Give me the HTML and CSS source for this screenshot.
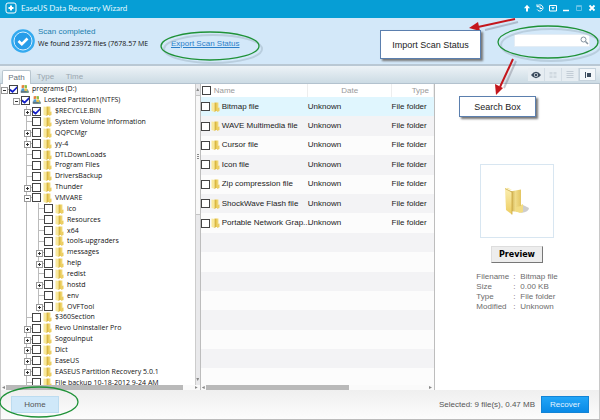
FILE: index.html
```html
<!DOCTYPE html>
<html lang="en">
<head>
<meta charset="utf-8">
<title>EaseUS Data Recovery Wizard</title>
<link rel="stylesheet" href="styles.css">
</head>
<body>
<svg class="defs" aria-hidden="true">
  <defs>
    <linearGradient id="gold" x1="0" x2="1" y1="0" y2="0"><stop offset="0" stop-color="#d9b53c"/><stop offset="0.4" stop-color="#e6c650"/><stop offset="1" stop-color="#f5e08a"/></linearGradient>
    <linearGradient id="cover" x1="0" x2="0" y1="0" y2="1"><stop offset="0" stop-color="#fbeeb0"/><stop offset="1" stop-color="#edcd60"/></linearGradient>
    <linearGradient id="sheet" x1="0" x2="1" y1="0" y2="0"><stop offset="0" stop-color="#c7a440"/><stop offset="0.5" stop-color="#f0dc8a"/><stop offset="1" stop-color="#e3c561"/></linearGradient>
  </defs>
  <symbol id="folder" viewBox="0 0 9 10"><path d="M3.500 .5H7.500V9H3.500z" fill="url(#gold)"/><path d="M.5 .5L4 1v9L.5 9z" fill="#f9e99c"/><path d="M4 1v9" stroke="#c9a637" stroke-width=".6"/><path d="M6.500 6L8.500 5.500V9L6 10z" fill="#ecce62"/></symbol>
  <symbol id="drive" viewBox="0 0 11 11"><path d="M1 6.500L9 5.500l2 3V10H1z" fill="#8d9ba3"/><path d="M1 8h9v2H1z" fill="#5c7680"/><path d="M2 1l3-.5v3.500L2 4.500z" fill="#e8803c"/><path d="M5.500 .5l3 .5v3.500l-3-.5z" fill="#8dbb45"/><path d="M2 5l3-.5v3L2 8z" fill="#4b9ed6"/><path d="M5.500 4.500l3 .5v3l-3-.5z" fill="#efc640"/><path d="M8 9h2" stroke="#77d16a"/></symbol>
</svg>

<div class="window">
  <header class="titlebar">
    <svg class="logo" viewBox="0 0 12 12"><rect x="1" y="1" width="10" height="10" rx="2" fill="none" stroke="#fff"/><path d="M6 3.500v5M3.500 6h5" stroke="#fff" stroke-width="2"/></svg>
    <h1>EaseUS Data Recovery Wizard</h1>
    <div class="winbuttons">
      <button aria-label="Upgrade"><svg viewBox="0 0 8 8"><path d="M4 3v4.500" stroke="#fff" stroke-width="2"/><path d="M1 4.200L4 .8l3 3.400z" fill="#fff"/></svg></button>
      <button aria-label="History"><svg viewBox="0 0 8 8"><path d="M1.500 2a3.100 3.100 0 1 1-.3 3.500M1 .3v2.400h2.500M4 2.500v2h2" fill="none" stroke="#fff"/></svg></button>
      <button aria-label="Menu"><svg viewBox="0 0 8 8"><path d="M.5 1.500h7v5.500h-7z" fill="none" stroke="#fff"/><path d="M2.200 3.200h3.600L4 5.400z" fill="#fff"/></svg></button>
      <button aria-label="Minimize"><svg viewBox="0 0 8 8"><path d="M1 6.500h6" stroke="#fff" stroke-width="1.500"/></svg></button>
      <button aria-label="Maximize"><svg viewBox="0 0 8 8"><path d="M1.500 1.500h5v5h-5zM1 2.500h6" fill="none" stroke="#62c0e6"/></svg></button>
      <button aria-label="Close"><svg viewBox="0 0 8 8"><path d="M1.500 1.500l5 5M6.500 1.500l-5 5" stroke="#fff" stroke-width="1.800"/></svg></button>
    </div>
  </header>

  <section class="status">
    <svg class="badge" viewBox="0 0 24 24"><circle cx="12" cy="12" r="11.800" fill="#33aaf0"/><circle cx="12" cy="12" r="9" fill="#279de9" stroke="#d6efff" stroke-width="1"/><path d="M7.500 12l3.300 3.200 5.700-5.700" fill="none" stroke="#fff" stroke-width="2.600"/></svg>
    <div class="message">
      <p class="done">Scan completed</p>
      <p class="found">We found 23972 files (7678.57 ME</p>
    </div>
    <div class="export">
      <a href="#export">Export Scan Status</a>
      <svg class="ring" viewBox="0 0 106 34"><ellipse class="shade" cx="53" cy="18" rx="49" ry="14"/><ellipse cx="50" cy="15" rx="49" ry="14"/></svg>
    </div>
    <div class="search">
      <input type="search" aria-label="Search">
      <svg class="glass" viewBox="0 0 9 9"><circle cx="3.500" cy="3.500" r="2.500" fill="none" stroke="#8593a0"/><path d="M5.500 5.500L8 8" stroke="#8593a0" stroke-width="1.500"/></svg>
      <svg class="ring" viewBox="0 0 106 38"><ellipse class="shade" cx="54" cy="20" rx="50" ry="16"/><ellipse cx="51" cy="17" rx="50" ry="16"/></svg>
    </div>
  </section>

  <nav class="tabs">
    <button class="tab active">Path</button>
    <button class="tab">Type</button>
    <button class="tab">Time</button>
    <div class="views">
      <button aria-label="Preview"><svg viewBox="0 0 10 8"><path d="M0 4Q5-2.500 10 4 5 10.500 0 4z" fill="#3a4b5d"/><circle cx="5" cy="4" r="2.100" fill="#dfe6ec"/><circle cx="5" cy="4" r="1.300" fill="#3a4b5d"/></svg></button>
      <button aria-label="Grid"><svg viewBox="0 0 10 8"><path d="M1.500 1h3v2.500h-3zM5.500 1h3v2.500h-3zM1.500 4.500h3V7h-3zM5.500 4.500h3V7h-3z" fill="#d0d9e0"/></svg></button>
      <button aria-label="List"><svg viewBox="0 0 10 8"><path d="M1.500 .5h7M1.500 2.500h7M1.500 4.500h7M1.500 6.500h7" stroke="#c3cdd6"/></svg></button>
      <button class="on" aria-label="Details"><svg viewBox="0 0 10 8"><path d="M2.500 1v6" stroke="#3a4b5d"/><path d="M4 2h4v4H4z" fill="#3a4b5d"/></svg></button>
    </div>
  </nav>

  <main class="panes">
    <section class="tree">
      <div class="treeview">
        <ul>
          <li class="l0"><i class="minus"></i><label><input type="checkbox" checked><svg><use href="#drive"/></svg>programs (D:)</label></li>
          <li class="l1"><i class="minus"></i><label><input type="checkbox" checked><svg><use href="#drive"/></svg>Losted Partition1(NTFS)</label></li>
          <li class="l2"><i class="plus"></i><label><input type="checkbox" checked><svg><use href="#folder"/></svg>$RECYCLE.BIN</label></li>
          <li class="l2"><i></i><label><input type="checkbox"><svg><use href="#folder"/></svg>System Volume Information</label></li>
          <li class="l2"><i class="plus"></i><label><input type="checkbox"><svg><use href="#folder"/></svg>QQPCMgr</label></li>
          <li class="l2"><i class="plus"></i><label><input type="checkbox"><svg><use href="#folder"/></svg>yy-4</label></li>
          <li class="l2"><i></i><label><input type="checkbox"><svg><use href="#folder"/></svg>DTLDownLoads</label></li>
          <li class="l2"><i></i><label><input type="checkbox"><svg><use href="#folder"/></svg>Program Files</label></li>
          <li class="l2"><i></i><label><input type="checkbox"><svg><use href="#folder"/></svg>DriversBackup</label></li>
          <li class="l2"><i class="plus"></i><label><input type="checkbox"><svg><use href="#folder"/></svg>Thunder</label></li>
          <li class="l2"><i class="minus"></i><label><input type="checkbox"><svg><use href="#folder"/></svg>VMVARE</label></li>
          <li class="l3"><i></i><label><input type="checkbox"><svg><use href="#folder"/></svg>ico</label></li>
          <li class="l3"><i></i><label><input type="checkbox"><svg><use href="#folder"/></svg>Resources</label></li>
          <li class="l3"><i></i><label><input type="checkbox"><svg><use href="#folder"/></svg>x64</label></li>
          <li class="l3"><i></i><label><input type="checkbox"><svg><use href="#folder"/></svg>tools-upgraders</label></li>
          <li class="l3"><i class="plus"></i><label><input type="checkbox"><svg><use href="#folder"/></svg>messages</label></li>
          <li class="l3"><i class="plus"></i><label><input type="checkbox"><svg><use href="#folder"/></svg>help</label></li>
          <li class="l3"><i></i><label><input type="checkbox"><svg><use href="#folder"/></svg>redist</label></li>
          <li class="l3"><i class="plus"></i><label><input type="checkbox"><svg><use href="#folder"/></svg>hostd</label></li>
          <li class="l3"><i></i><label><input type="checkbox"><svg><use href="#folder"/></svg>env</label></li>
          <li class="l3"><i class="plus"></i><label><input type="checkbox"><svg><use href="#folder"/></svg>OVFTool</label></li>
          <li class="l2"><i></i><label><input type="checkbox"><svg><use href="#folder"/></svg>$360Section</label></li>
          <li class="l2"><i class="plus"></i><label><input type="checkbox"><svg><use href="#folder"/></svg>Revo Uninstaller Pro</label></li>
          <li class="l2"><i class="plus"></i><label><input type="checkbox"><svg><use href="#folder"/></svg>SogouInput</label></li>
          <li class="l2"><i class="plus"></i><label><input type="checkbox"><svg><use href="#folder"/></svg>Dict</label></li>
          <li class="l2"><i class="plus"></i><label><input type="checkbox"><svg><use href="#folder"/></svg>EaseUS</label></li>
          <li class="l2"><i class="plus"></i><label><input type="checkbox"><svg><use href="#folder"/></svg>EASEUS Partition Recovery 5.0.1</label></li>
          <li class="l2"><i></i><label><input type="checkbox"><svg><use href="#folder"/></svg>File backup 10-18-2012 9-24 AM</label></li>
        </ul>
        <div class="vbar"><b class="up"></b><span></span><b class="down"></b></div>
      </div>
      <div class="hbar"><b class="left"></b><span></span><b class="right"></b></div>
    </section>

    <section class="files">
      <div class="sheet">
        <table>
          <colgroup><col class="cname"><col class="cdate"><col class="ctype"></colgroup>
          <thead><tr><th><label><input type="checkbox">Name</label></th><th class="date">Date</th><th class="type">Type</th></tr></thead>
          <tbody>
            <tr class="selected"><td><label><input type="checkbox"><svg><use href="#folder"/></svg>Bitmap file</label></td><td>Unknown</td><td>File folder</td></tr>
            <tr><td><label><input type="checkbox"><svg><use href="#folder"/></svg>WAVE Multimedia file</label></td><td>Unknown</td><td>File folder</td></tr>
            <tr><td><label><input type="checkbox"><svg><use href="#folder"/></svg>Cursor file</label></td><td>Unknown</td><td>File folder</td></tr>
            <tr><td><label><input type="checkbox"><svg><use href="#folder"/></svg>Icon file</label></td><td>Unknown</td><td>File folder</td></tr>
            <tr><td><label><input type="checkbox"><svg><use href="#folder"/></svg>Zip compression file</label></td><td>Unknown</td><td>File folder</td></tr>
            <tr><td><label><input type="checkbox"><svg><use href="#folder"/></svg>ShockWave Flash file</label></td><td>Unknown</td><td>File folder</td></tr>
            <tr><td><label><input type="checkbox"><svg><use href="#folder"/></svg>Portable Network Grap...</label></td><td>Unknown</td><td>File folder</td></tr>
            <tr><td colspan="3"></td></tr>
            <tr><td colspan="3"></td></tr>
            <tr><td colspan="3"></td></tr>
            <tr><td colspan="3"></td></tr>
            <tr><td colspan="3"></td></tr>
            <tr><td colspan="3"></td></tr>
            <tr><td colspan="3"></td></tr>
            <tr><td colspan="3"></td></tr>
          </tbody>
        </table>
      </div>
      <div class="hbar short"><b class="left"></b><span></span><b class="right"></b></div>
    </section>

    <aside class="preview">
      <div class="thumb">
        <svg viewBox="0 0 26 28"><path d="M17 26q8-1 8-5l-6-3z" fill="#cdcdcd"/><path d="M6 4.500L17 2.500V24l-3 1-8-1z" fill="url(#sheet)"/><path d="M1 1.500L8 5v22.500L2 23z" fill="url(#cover)"/><path d="M1 1.500L8 5v22.500" fill="none" stroke="#c8a43f" stroke-width=".8"/><path d="M1 1.500L4 .8l4 2.200" fill="#f9eba4"/><path d="M12 24.500V20l5-1v-1l2-1v8l-3 1z" fill="#f2dc83"/></svg>
      </div>
      <button class="previewbtn">Preview</button>
      <dl>
        <dt>Filename</dt><dd>Bitmap file</dd>
        <dt>Size</dt><dd>0.00 KB</dd>
        <dt>Type</dt><dd>File folder</dd>
        <dt>Modified</dt><dd>Unknown</dd>
      </dl>
    </aside>
  </main>

  <footer class="footer">
    <div class="homewrap">
      <button class="home">Home</button>
      <svg class="ring" viewBox="0 0 82 34"><ellipse cx="40" cy="16" rx="39" ry="15"/></svg>
    </div>
    <p>Selected: 9 file(s), 0.47 MB</p>
    <button class="recover">Recover</button>
  </footer>

  <div class="notes">
    <svg class="arrows" viewBox="0 0 140 80">
      <g class="arrowshade"><path d="M50 4L17 12M48 43L36 70"/></g>
      <g class="arrow"><path d="M47 1L10 9M45 41L32 69"/><path class="head" d="M1 10l9-6 2 9z"/><path class="head" d="M28 77l-1-11 8 4z"/></g>
    </svg>
    <p class="note import">Import Scan Status</p>
    <p class="note box">Search Box</p>
  </div>
</div>
</body>
</html>
```
FILE: styles.css
```css
* { box-sizing: border-box; }
body, h1, p, ul, dl, dd { margin: 0; padding: 0; }
html, body { height: 100%; }
body {
  font: 8px/10px "Liberation Sans", Arial, sans-serif;
  color: #333;
  background: #fff;
}
button {
  font: inherit;
  margin: 0;
  padding: 0;
  border: 0;
  background: none;
  color: inherit;
}
svg { display: block; flex: none; }
.defs { position: absolute; width: 0; height: 0; }

.window {
  position: relative;
  display: flex;
  flex-direction: column;
  height: 100vh;
  overflow: hidden;
  border-bottom: 1px solid #bbb;
}

/* Title bar */
.titlebar {
  flex: none;
  display: flex;
  align-items: center;
  height: 18px;
  padding: 0 4px 2px 5px;
  background: #069ed5;
  color: #e4f8ff;
}
.logo { width: 12px; height: 12px; margin-right: 4px; }
h1 { font: 8px/10px Lato, sans-serif; }
.winbuttons { display: flex; gap: 5px; margin-left: auto; }
.winbuttons svg { width: 8px; height: 8px; }

/* Scan status */
.status {
  flex: none;
  display: flex;
  align-items: flex-start;
  height: 48px;
  padding: 8px 10px 0 11px;
  background: #d3e8f9;
  border-bottom: 2px solid #b9c8d4;
}
.badge { width: 24px; height: 24px; margin-top: 3px; }
.message { width: 122px; margin-left: 3px; white-space: nowrap; }
.message p { line-height: 12px; }
.done { color: #1c7fae; }
.found { color: #111; font-family: "Open Sans", sans-serif; font-size: 7px; }
.export { position: relative; margin: 13px 0 0 11px; }
.export a { color: #2a7fc9; }
.ring { position: absolute; overflow: visible; pointer-events: none; }
.ring ellipse { fill: none; stroke: #1f9238; stroke-width: 1.3; }
.ring .shade { stroke: #a9bdcb; stroke-width: 2; opacity: 0.6; }
.export .ring { left: -11px; top: -8px; width: 106px; height: 34px; }
.search { position: relative; width: 76px; margin: 8px 0 0 auto; }
.search input {
  display: block;
  width: 100%;
  height: 13px;
  padding: 0 12px 0 3px;
  border: 1px solid #e4edf5;
  background: #fff;
  font: inherit;
}
.glass { position: absolute; right: 1px; top: 2px; width: 9px; height: 9px; }
.search .ring { right: -13px; top: -9px; width: 106px; height: 38px; }

/* Tabs */
.tabs {
  flex: none;
  display: flex;
  align-items: flex-end;
  height: 18px;
  padding: 0 4px 0 2px;
  background: linear-gradient(#edf3f7, #ccdbe4);
  border-bottom: 1px solid #b3c2ce;
}
.tab { width: 29px; height: 13px; color: #9ba7b0; }
.tab.active {
  height: 14px;
  margin-bottom: -1px;
  border: 1px solid #b9c6cf;
  border-bottom: 0;
  border-radius: 2px 2px 0 0;
  background: #fff;
  color: #66737c;
}
.views { display: flex; align-self: center; margin-left: auto; }
.views button {
  display: grid;
  place-items: center;
  width: 17px;
  height: 13px;
  background: #e6edf2;
  border-right: 1px solid #d3dde5;
}
.views .on { background: #f3f7fa; border: 1px solid #c5d2dc; }
.views svg { width: 10px; height: 8px; }

/* Panes */
.panes { flex: 1; display: flex; min-height: 0; border-right: 1px solid #c8c8c8; border-left: 1px solid #c8c8c8; }
.tree { flex: 0 0 33.4%; display: flex; flex-direction: column; border-right: 1px solid #bdbdbd; }
.treeview { flex: 1; display: flex; min-height: 0; overflow: hidden; }
.tree ul {
  flex: 1;
  display: grid;
  grid-auto-rows: minmax(0, 1fr);
  margin-bottom: -3px;
  list-style: none;
  font-family: "Open Sans", "Noto Sans", sans-serif;
  font-size: 7px;
  color: #111;
  white-space: nowrap;
}
.tree li { display: flex; align-items: center; background-repeat: no-repeat; }
.tree li i { position: relative; flex: none; width: 8px; height: 5px; background: linear-gradient(#bbb, #bbb) 3px 2px / 5px 1px no-repeat; }
.plus::before, .minus::before {
  content: "";
  display: block;
  width: 5px;
  height: 5px;
  border: 1px solid #999;
  background: linear-gradient(#333, #333) center / 3px 1px no-repeat #fff;
}
.plus::before { background: linear-gradient(#333, #333) center / 3px 1px no-repeat, linear-gradient(#333, #333) center / 1px 3px no-repeat, #fff; }
.l0 { padding-left: 0; }
.l1 { padding-left: 12px; }
.l2 { padding-left: 23px; background-image: linear-gradient(#bbb, #bbb); background-position: 25px 0; background-size: 1px 100%; }
.l3 { padding-left: 35px; background-image: linear-gradient(#bbb, #bbb), linear-gradient(#bbb, #bbb); background-position: 25px 0, 37px 0; background-size: 1px 100%; }
.tree label { display: flex; align-items: center; }
.tree svg { width: 9px; height: 10px; margin: 0 3px 0 2px; }
input[type="checkbox"] {
  appearance: none;
  flex: none;
  width: 9px;
  height: 9px;
  margin: 0;
  border: 1px solid #444;
  background: #fff;
}
input[type="checkbox"]:checked::before {
  content: "";
  display: block;
  width: 7px;
  height: 7px;
  background: #1420c8;
  clip-path: polygon(0 40%, 38% 65%, 100% 5%, 100% 38%, 38% 100%, 0 72%);
}

/* Scroll bars */
.vbar {
  flex: none;
  display: flex;
  flex-direction: column;
  align-items: center;
  width: 5px;
  padding: 4px 0;
  background: #e9e9eb;
  border-left: 1px solid #ccc;
}
.vbar span { width: 4px; height: 120px; margin: 4px 0 auto; background: linear-gradient(#888, #888) center 58px / 2px 1px no-repeat, linear-gradient(#888, #888) center 60px / 2px 1px no-repeat, linear-gradient(#888, #888) center 62px / 2px 1px no-repeat, #f8f8f8; border: 1px solid #c4c4c4; border-width: 1px 0; }
.hbar { flex: none; display: flex; align-items: center; height: 5px; padding: 0 1px; background: #fafafa; }
.hbar span { width: 90%; height: 5px; margin-right: auto; background: #b9b9b9; }
.hbar.short span { width: 62%; }
.hbar b, .vbar b { width: 3px; height: 3px; background: #888; }
.hbar b { margin-right: 1px; }
.up { clip-path: polygon(50% 0, 100% 100%, 0 100%); }
.down { clip-path: polygon(0 0, 100% 0, 50% 100%); }
.left { clip-path: polygon(0 50%, 100% 0, 100% 100%); }
.right { clip-path: polygon(0 0, 100% 50%, 0 100%); }

/* File list */
.files { flex: 1; display: flex; flex-direction: column; min-width: 0; border-right: 1px solid #bdbdbd; }
.sheet { flex: 1; min-height: 0; overflow: hidden; }
table { width: 100%; height: 304px; border-collapse: collapse; table-layout: fixed; color: #222; }
.cname { width: 46%; }
.cdate { width: 36%; }
.ctype { width: 18%; }
th { height: 13px; padding: 0; font-weight: normal; color: #9a9a9a; border-right: 1px solid #eee; }
th.type { text-align: right; padding-right: 4px; }
td { height: 19px; padding: 0; white-space: nowrap; }
th label, td label { display: flex; align-items: center; }
th label { gap: 3px; padding-left: 1px; }
td label { gap: 1px; }
td svg { width: 9px; height: 10px; margin-right: 1px; }
tbody tr { background: #fcfcfc; }
tbody tr:nth-child(even) { background: #f3f3f5; }
tbody tr.selected { background: #e0f6fe; }

/* Preview */
.preview { flex: 0 0 164px; display: flex; flex-direction: column; align-items: center; padding-top: 80px; }
.thumb { display: grid; place-items: center; width: 74px; height: 74px; border: 1px solid #d8e6f1; }
.thumb svg { width: 26px; height: 28px; }
.previewbtn {
  width: 52px;
  height: 17px;
  margin: 8px 0 9px;
  border: 1px solid #ddd;
  border-right-color: #777;
  border-bottom-color: #777;
  background: #ededed;
  color: #000;
  font: bold 8px/10px "DejaVu Sans", sans-serif;
}
dl { display: grid; grid-template-columns: 37px auto; color: #6c6c6c; }
dd::before { content: ":"; display: inline-block; width: 7px; }

/* Footer */
.footer {
  flex: none;
  display: flex;
  align-items: center;
  height: 29px;
  padding: 0 10px;
  background: linear-gradient(#efefef, #fcfcfc);
  border: 1px solid #c8c8c8;
  border-width: 0 1px;
  color: #555;
}
.homewrap { position: relative; margin-right: auto; }
.home { display: block; width: 48px; height: 17px; background: #cfe8f9; border: 1px solid #bcdcf0; }
.homewrap .ring { left: -12px; top: -10px; width: 82px; height: 34px; }
.recover { width: 48px; height: 17px; margin-left: 6px; background: linear-gradient(#22a5f7, #0a8ae6); border: 1px solid #1284d6; color: #e4f4ff; }

/* Callouts over the window */
.notes { position: absolute; top: 18px; right: 0; width: 220px; height: 104px; pointer-events: none; }
.note {
  position: absolute;
  display: grid;
  place-items: center;
  background: #fff;
  border: 1px solid #5b7fae;
  box-shadow: 2px 2px 2px #777;
  font-size: 9px;
  color: #222;
}
.import { left: 0; top: 12px; width: 101px; height: 29px; }
.box { left: 79px; top: 78px; width: 77px; height: 21px; }
.arrows { position: absolute; left: 88px; top: 0; width: 140px; height: 80px; }
.arrow path { fill: none; stroke: #c4161c; stroke-width: 2; }
.arrow .head { fill: #c4161c; stroke: none; }
.arrowshade path { fill: none; stroke: #667; stroke-width: 2; opacity: 0.35; }
```
